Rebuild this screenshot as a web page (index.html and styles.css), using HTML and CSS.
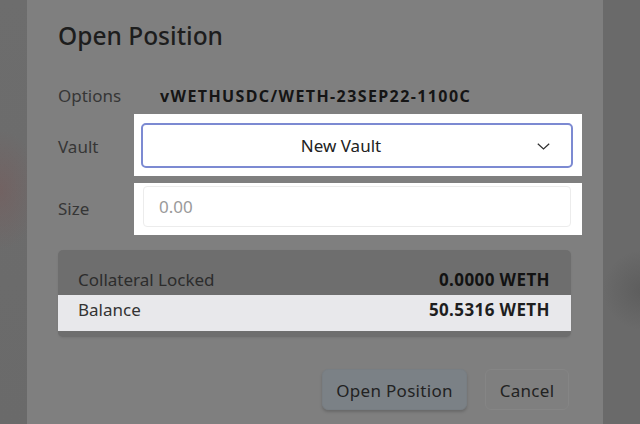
FILE: index.html
```html
<!DOCTYPE html>
<html lang="en">
<head>
<meta charset="utf-8">
<title>Open Position</title>
<link rel="stylesheet" href="styles.css">
</head>
<body>
<div class="page">
  <div class="side side-left"></div>
  <div class="modal">
    <h1 class="title">Open Position</h1>
    <div class="row row-options">
      <span class="label">Options</span>
      <span class="option-value">vWETHUSDC/WETH-23SEP22-1100C</span>
    </div>
    <div class="row row-vault">
      <span class="label">Vault</span>
      <div class="spot spot-vault">
        <div class="select">
          <span class="select-text">New Vault</span>
          <svg class="chevron" width="13" height="7" viewBox="0 0 13 7"><path d="M0.8 0.8 L6.5 6 L12.2 0.8" fill="none" stroke="#2e2e2e" stroke-width="1.2"/></svg>
        </div>
      </div>
    </div>
    <div class="row row-size">
      <span class="label">Size</span>
      <div class="spot spot-size">
        <div class="input"><span class="placeholder">0.00</span></div>
      </div>
    </div>
    <div class="summary">
      <div class="sum-row sum-collateral">
        <span>Collateral Locked</span>
        <span class="sum-val">0.0000 WETH</span>
      </div>
      <div class="sum-row sum-balance">
        <span>Balance</span>
        <span class="sum-val">50.5316 WETH</span>
      </div>
    </div>
    <div class="actions">
      <button class="btn btn-primary">Open Position</button>
      <button class="btn btn-cancel">Cancel</button>
    </div>
  </div>
  <div class="side side-right"></div>
</div>
</body>
</html>
```
FILE: styles.css
```css
* { box-sizing: border-box; }
html, body { margin: 0; padding: 0; }
body {
  width: 640px;
  height: 424px;
  overflow: hidden;
  background: #6b6b6b;
  font-family: "Noto Sans", "Open Sans", sans-serif;
}
.page {
  display: flex;
  height: 424px;
}
.side { flex: none; }
.side-left {
  width: 27px;
  background:
    radial-gradient(ellipse 40px 60px at 0px 190px, rgba(118, 92, 92, 0.6), rgba(110, 100, 100, 0) 100%),
    linear-gradient(to bottom, #6d6d6d, #6a6a6a);
}
.side-right {
  width: 37px;
  background:
    radial-gradient(ellipse 40px 40px at 40px 290px, rgba(80, 80, 80, 0.5), rgba(80, 80, 80, 0) 100%),
    #6a6a6a;
}
.modal {
  width: 576px;
  height: 424px;
  background: #7f7f7f;
  padding: 21px 32px 0 31px;
  display: flex;
  flex-direction: column;
}
.title {
  margin: 0;
  font-size: 24.5px;
  line-height: 30px;
  font-weight: 500;
  color: #1d1d1d;
}
.row {
  display: flex;
  align-items: center;
}
.label {
  width: 76px;
  flex: none;
  font-size: 17px;
  line-height: 24px;
  color: #363636;
}
.row-options {
  margin-top: 33px;
  height: 24px;
}
.option-value {
  margin-left: 26px;
  font-size: 16px;
  font-weight: 700;
  color: #151515;
  letter-spacing: 1.4px;
}
.row-vault { margin-top: 6px; }
.row-vault .label { padding-top: 3px; }
.spot {
  flex: none;
  background: #fff;
  width: 448px;
}
.spot-vault {
  padding: 9px 9px 8px 7px;
}
.select {
  height: 45px;
  border: 2px solid #7c8ad2;
  border-radius: 5px;
  display: flex;
  align-items: center;
  position: relative;
}
.select-text {
  flex: 1;
  text-align: center;
  font-size: 17px;
  color: #222;
  padding-right: 32px;
}
.chevron {
  position: absolute;
  right: 21px;
  top: 18px;
}
.row-size { margin-top: 7px; }
.spot-size {
  padding: 3px 11px 8px 9px;
}
.input {
  height: 41px;
  border: 1px solid #ececec;
  border-radius: 4px;
  display: flex;
  align-items: center;
  padding-left: 15px;
}
.placeholder {
  font-size: 17px;
  color: #9a9a9a;
}
.summary {
  margin-top: 15px;
  width: 513px;
  background: #6e6e6e;
  border-radius: 5px;
  padding-top: 14px;
  padding-bottom: 6px;
  box-shadow: 0 1px 2px rgba(0,0,0,0.08);
}
.sum-row {
  display: flex;
  justify-content: space-between;
  padding: 0 21px 0 20px;
  font-size: 17px;
  line-height: 24px;
}
.sum-collateral {
  height: 31px;
  padding-top: 4px;
  color: #2c2c2c;
}
.sum-collateral .sum-val { color: #121212; }
.sum-balance {
  height: 36px;
  padding-top: 3px;
  background: #e8e8eb;
  color: #333;
}
.sum-val {
  font-weight: 700;
  color: #1e1e1e;
  letter-spacing: 0.4px;
}
.actions {
  margin-top: 32px;
  display: flex;
  justify-content: flex-end;
  gap: 18px;
  padding-right: 2px;
}
.btn {
  height: 41px;
  font-family: inherit;
  font-size: 17px;
  letter-spacing: 0.3px;
  border-radius: 6px;
  padding: 2px 10px 0;
  color: #222;
  cursor: pointer;
}
.btn-primary {
  width: 145px;
  background: #7b8186;
  border: 1px solid #787e83;
  box-shadow: 0 2px 3px rgba(0,0,0,0.18);
}
.btn-cancel {
  width: 84px;
  background: #7f7f7f;
  border: 1px solid #858585;
}
```
